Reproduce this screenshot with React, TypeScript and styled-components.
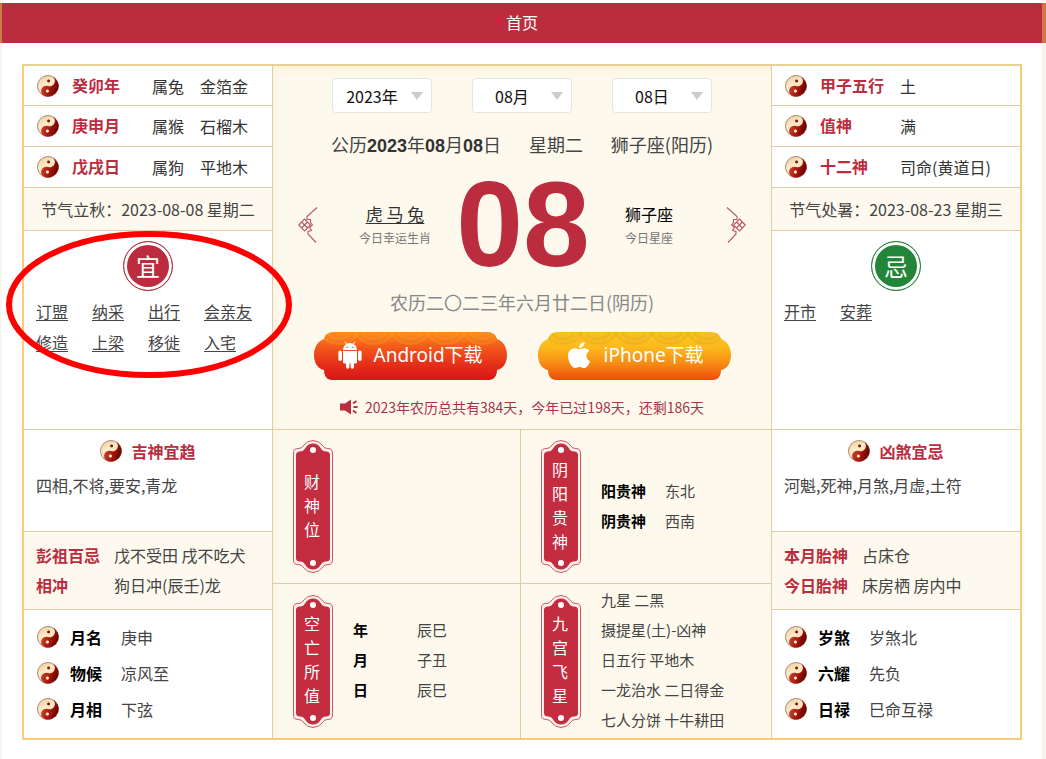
import React from "react";
import styled, { createGlobalStyle } from "styled-components";
import { FaApple } from "react-icons/fa";

const RED = "#bb2d3e";
const LINE = "#e3cba6";
const CREAM = "#fdf9ef";

const GlobalStyle = createGlobalStyle`
  *, *::before, *::after { box-sizing: border-box; }
  body {
    margin: 0;
    background: #fff;
    color: #444;
    font-family: "Noto Sans CJK SC", "Noto Sans", sans-serif;
    font-size: 16px;
    font-weight: 400;
    line-height: 24px;
  }
  ul, dl, dd, h2, p { margin: 0; padding: 0; }
  ul { list-style: none; }
  a { color: inherit; }
`;

const Page = styled.div`
  min-height: 100vh;
  padding-top: 3px;
  background: linear-gradient(to right, #f8f6f0 2px, #fff 2px, #fff calc(100% - 4px), #f5f3ee calc(100% - 4px));
`;

const TopNav = styled.nav`
  display: flex;
  align-items: center;
  justify-content: center;
  height: 40px;
  padding-bottom: 2px;
  background: ${RED};
  border-left: 2px solid #d07a45;
  border-right: 4px solid #cf7a42;
  color: #fff;
  a { text-decoration: none; }
`;

const Board = styled.main`
  display: grid;
  grid-template-columns: 1fr 2fr 1fr;
  margin: 21px 24px 19px 22px;
  border: 2px solid #fccb78;
  border-top-color: #e8d096;
`;

const SideColumn = styled.div<{ $side: "left" | "right" }>`
  position: relative;
  display: flex;
  flex-direction: column;
  ${(p) => (p.$side === "left" ? "border-right" : "border-left")}: 1px solid ${LINE};
`;

const PillarRow = styled.dl<{ $tall?: boolean }>`
  display: flex;
  align-items: center;
  height: ${(p) => (p.$tall ? 41 : 40)}px;
  padding-left: 13px;
  border-bottom: 1px solid ${LINE};
  dt { width: 80px; margin-left: 13px; padding-bottom: 2px; color: ${RED}; font-weight: 700; }
  dd { display: flex; gap: 16px; color: #333; }
`;

const SolarTerm = styled.p`
  display: flex;
  align-items: center;
  justify-content: center;
  height: 43px;
  background: ${CREAM};
  border-bottom: 1px solid ${LINE};
  white-space: pre;
`;

const Advice = styled.section`
  height: 199px;
  padding: 10px 12px 0;
  border-bottom: 1px solid ${LINE};
`;

const Seal = styled.h2<{ $color: string }>`
  display: flex;
  align-items: center;
  justify-content: center;
  width: 50px;
  height: 50px;
  margin: 0 auto 5px;
  border: 1px solid ${(p) => p.$color};
  border-radius: 50%;
  background: ${(p) => p.$color};
  box-shadow: inset 0 0 0 3px #fff;
  color: #fff;
  font-size: 24px;
  font-weight: 400;
  line-height: 48px;
`;

const AdviceList = styled.ul`
  display: grid;
  grid-template-columns: repeat(4, 56px);
  line-height: 31px;
  white-space: nowrap;
  a { text-underline-offset: 2px; text-decoration-thickness: 1px; }
`;

const Marker = styled.svg`
  position: absolute;
  top: 165px;
  left: -18px;
  width: 286px;
  height: 147px;
  pointer-events: none;
`;

const Spirits = styled.section`
  height: 102px;
  padding: 9px 12px 0;
  border-bottom: 1px solid ${LINE};
  p { margin-top: 10px; }
`;

const SpiritsTitle = styled.h2`
  display: flex;
  align-items: center;
  justify-content: center;
  gap: 9px;
  color: ${RED};
  font-size: 16px;
  font-weight: 700;
`;

const Taboo = styled.dl`
  height: 78px;
  padding: 8px 12px 0;
  background: ${CREAM};
  border-bottom: 1px solid ${LINE};
  line-height: 30px;
  div { display: flex; }
  dt { width: 78px; color: ${RED}; font-weight: 700; }
`;

const SignList = styled.dl`
  flex: 1;
  padding: 9px 13px;
  div { display: flex; align-items: center; height: 36px; }
  dt { margin: 0 19px 0 11px; color: #000; font-weight: 700; }
`;

const Center = styled.div`
  display: flex;
  flex-direction: column;
  background:
    linear-gradient(to bottom, #fdf3d8, transparent 10px),
    linear-gradient(to right, #fdf5e6, transparent 8px),
    repeating-linear-gradient(to bottom, #fdf9ee 0 6px, #fcf9eb 6px 10px);
`;

const Today = styled.section`
  display: flex;
  flex-direction: column;
  align-items: center;
  height: 364px;
  padding-top: 12px;
  border-bottom: 1px solid ${LINE};
`;

const DateForm = styled.form`
  display: flex;
  gap: 40px;
`;

const SelectBox = styled.div`
  position: relative;
  width: 100px;
  height: 35px;
  svg { position: absolute; top: 14px; right: 9px; pointer-events: none; }
`;

const DateSelect = styled.select`
  appearance: none;
  width: 100%;
  height: 100%;
  padding: 0 20px 0 0;
  border: 1px solid #e6e4de;
  border-radius: 4px;
  background: #fff;
  color: #111;
  font: inherit;
  text-align: center;
  text-align-last: center;
`;

const SolarDate = styled.p`
  display: flex;
  justify-content: space-between;
  width: 382px;
  height: 24px;
  margin-top: 19px;
  font-size: 18px;
  b { color: #333; font-family: "Liberation Sans", sans-serif; font-weight: 700; line-height: 20px; }
`;

const Hero = styled.div`
  display: grid;
  grid-template-columns: 20px 1fr 136px 1fr 20px;
  grid-template-rows: 120px;
  align-items: center;
  width: 448px;
  margin-top: 4px;
  text-align: center;
`;

const StepButton = styled.button`
  height: 36px;
  margin-top: 10px;
  padding: 0;
  border: 0;
  background: none;
  cursor: pointer;
  svg { display: block; }
`;

const BigDay = styled.strong`
  margin-top: 8px;
  padding-left: 2px;
  color: ${RED};
  font-family: "Liberation Sans", sans-serif;
  font-size: 120px;
  font-weight: 700;
  line-height: 120px;
`;

const Omen = styled.div<{ $side: "left" | "right" }>`
  margin-top: 12px;
  padding-${(p) => p.$side}: 18px;
  color: #000;
  small { display: block; color: #777; font-size: 12px; }
  a { color: #333; font-size: 17px; text-underline-offset: 2px; text-decoration-thickness: 1px; }
`;

const LunarDate = styled.p`
  margin-top: 10px;
  color: #888;
  font-size: 18px;
`;

const Downloads = styled.div`
  display: flex;
  gap: 31px;
  margin-top: 18px;
`;

const DownloadLink = styled.a`
  display: grid;
  width: 193px;
  height: 48px;
  color: #fff;
  font-family: "Noto Sans", "Noto Sans CJK SC", sans-serif;
  font-size: 19px;
  font-weight: 400;
  text-decoration: none;
  > * { grid-area: 1 / 1; }
`;

const DownloadLabel = styled.span<{ $indent: number; $gap: number }>`
  display: flex;
  align-items: center;
  gap: ${(p) => p.$gap}px;
  height: 46px;
  padding-left: ${(p) => p.$indent}px;
  white-space: nowrap;
`;

const Tip = styled.p`
  display: flex;
  align-items: center;
  gap: 7px;
  height: 20px;
  margin-top: 17px;
  color: #a93248;
  font-size: 14px;
`;

const Quarters = styled.div`
  display: grid;
  flex: 1;
  grid-template-columns: calc(50% - 1px) 1fr;
  grid-template-rows: 154px 154px;
`;

const Quarter = styled.section`
  display: flex;
  align-items: center;
  gap: 20px;
  padding-left: 20px;
  font-size: 15px;
  line-height: 30px;
  &:nth-child(odd) { border-right: 1px solid ${LINE}; }
  &:nth-child(-n + 2) { border-bottom: 1px solid ${LINE}; }
  dl, ul { padding-bottom: 2px; }
`;

const PlaqueBox = styled.h2`
  display: grid;
  place-items: center;
  width: 40px;
  height: 133px;
  color: #fff;
  font-size: 16px;
  font-weight: 400;
  line-height: 24px;
  > * { grid-area: 1 / 1; }
  span { width: 16px; margin: 0 2px 4px 0; word-break: break-all; }
`;

const PairList = styled.dl`
  div { display: flex; }
  dt { width: 64px; color: #000; font-weight: 700; }
`;

function Taiji() {
  return (
    <svg width="22" height="22" viewBox="0 0 22 22" aria-hidden="true">
      <defs>
        <linearGradient id="tjCream" x1="0" y1="0" x2="1" y2="1">
          <stop offset="0" stopColor="#e9c590" />
          <stop offset="0.4" stopColor="#fdebc9" />
          <stop offset="1" stopColor="#efc38c" />
        </linearGradient>
        <linearGradient id="tjRed" x1="0" y1="0" x2="1" y2="0">
          <stop offset="0" stopColor="#c4402a" />
          <stop offset="0.5" stopColor="#a8150f" />
          <stop offset="1" stopColor="#650300" />
        </linearGradient>
      </defs>
      <g transform="rotate(18 11 11)">
        <circle cx="11" cy="11" r="10.5" fill="url(#tjCream)" stroke="#9c6a50" strokeWidth="0.7" />
        <path
          d="M11 .5A10.500 10.500 0 0 1 11 21.500A5.250 5.250 0 0 1 11 11A5.250 5.250 0 0 0 11 .5Z"
          fill="url(#tjRed)"
        />
        <circle cx="10" cy="6" r="1.500" fill="#7a1a10" />
        <circle cx="12" cy="16" r="1.600" fill="#fdebc9" />
      </g>
    </svg>
  );
}

function Ornament({ flip }: { flip?: boolean }) {
  return (
    <svg width="20" height="36" viewBox="0 0 20 36" fill="none" stroke="#b9556a" strokeWidth="1.100" aria-hidden="true">
      <g transform={flip ? "matrix(-1 0 0 1 20 0)" : undefined}>
        <path d="M19 .5L9 9.500v3l3.500 0 0 3 2 2.500-3 2.500 2 3-3.500 1v2.500L18 35.500" />
        <path d="M.8 18L6.500 12l6 6-6 6zM3.700 15l5.700 6M9.400 15l-5.700 6" />
      </g>
    </svg>
  );
}

function Robot() {
  return (
    <svg width="24" height="28" viewBox="0 0 24 28" fill="#fff" aria-hidden="true">
      <path d="M7 .5l1.800 2.800M17 .5l-1.800 2.800" stroke="#fff" strokeWidth="0.9" />
      <path
        fillRule="evenodd"
        d="M5 9a7 7 0 0 1 14 0zM8.300 6.200a.8.8 0 1 0 1.600 0a.8.8 0 1 0-1.600 0M14.100 6.200a.8.8 0 1 0 1.600 0a.8.8 0 1 0-1.600 0"
      />
      <path d="M5 10h14v11a1.500 1.500 0 0 1-1.500 1.500H16V26a1.700 1.700 0 0 1-3.400 0v-3.500h-1.200V26A1.700 1.700 0 0 1 8 26v-3.500H6.500A1.500 1.500 0 0 1 5 21z" />
      <rect x="0.400" y="9.500" width="3.500" height="10.500" rx="1.700" />
      <rect x="20.100" y="9.500" width="3.500" height="10.500" rx="1.700" />
    </svg>
  );
}

const BADGE =
  "M20 0H173C179 0 182 3 183 7C189 9 193 15 193 23C193 31 189 37 183 38C183 44 180 48 175 48H18C13 48 10 44 10 38C4 37 0 31 0 23C0 15 4 9 10 7C11 3 14 0 20 0Z";

function BadgeShape({ id, stops, ripple }: { id: string; stops: string[]; ripple: string }) {
  return (
    <svg width="193" height="48" viewBox="0 0 193 48" aria-hidden="true">
      <defs>
        <linearGradient id={id} x1="0" y1="0" x2="0" y2="1">
          {stops.map((color, i) => (
            <stop key={color} offset={i / (stops.length - 1)} stopColor={color} />
          ))}
        </linearGradient>
        <clipPath id={`${id}-clip`}>
          <path d={BADGE} />
        </clipPath>
      </defs>
      <path d={BADGE} fill={`url(#${id})`} />
      <g clipPath={`url(#${id}-clip)`} fill="none" stroke={ripple} strokeOpacity="0.25" strokeWidth="2">
        {[25, 60, 96, 132, 168].map((x) => (
          <g key={x}>
            <ellipse cx={x} cy="0" rx="18" ry="12" fill={ripple} fillOpacity="0.18" />
            <ellipse cx={x} cy="0" rx="11" ry="7" />
          </g>
        ))}
      </g>
    </svg>
  );
}

function Speaker() {
  return (
    <svg width="18" height="16" viewBox="0 0 18 16" fill={RED} aria-hidden="true">
      <path d="M0 4.500h5L11 .5v15L5 11.500H0z" />
      <path d="M13 4.500L16.500 2M13.500 8H17.500M13 11.500L16.500 14" stroke={RED} strokeWidth="1.800" />
    </svg>
  );
}

function Plaque({ text }: { text: string }) {
  return (
    <PlaqueBox>
      <svg width="40" height="133" viewBox="0 0 40 133" aria-hidden="true">
        <path
          d="M.5 13Q.5 8.500 5 8.500Q9 8.500 10 6Q14 .5 20 .5Q26 .5 30 6Q31 8.500 35 8.500Q39.500 8.500 39.500 13V120Q39.500 124.500 35 124.500Q31 124.500 30 127Q26 132.500 20 132.500Q14 132.500 10 127Q9 124.500 5 124.500Q.5 124.500 .5 120Z"
          fill="#fdf3ea"
          stroke="#d0566a"
        />
        <path
          d="M3 15Q3 11.500 7 11.500Q10.500 11.500 12 8.500Q15 3.500 20 3.500Q25 3.500 28 8.500Q29.500 11.500 33 11.500Q37 11.500 37 15V118Q37 121.500 33 121.500Q29.500 121.500 28 124.500Q25 129.500 20 129.500Q15 129.500 12 124.500Q10.500 121.500 7 121.500Q3 121.500 3 118Z"
          fill="#c42c40"
        />
        <circle cx="20" cy="10" r="3" fill="#fff" />
        <circle cx="20" cy="123" r="3" fill="#fff" />
      </svg>
      <span>{text}</span>
    </PlaqueBox>
  );
}

interface SideData {
  side: "left" | "right";
  pillars: [string, string[]][];
  term: string;
  seal: string;
  sealColor: string;
  advice: string[];
  spiritsTitle: string;
  spirits: string;
  taboo: [string, string][];
  signs: [string, string][];
}

const LEFT: SideData = {
  side: "left",
  pillars: [
    ["癸卯年", ["属兔", "金箔金"]],
    ["庚申月", ["属猴", "石榴木"]],
    ["戊戌日", ["属狗", "平地木"]],
  ],
  term: "节气立秋：2023-08-08 星期二",
  seal: "宜",
  sealColor: RED,
  advice: ["订盟", "纳采", "出行", "会亲友", "修造", "上梁", "移徙", "入宅"],
  spiritsTitle: "吉神宜趋",
  spirits: "四相,不将,要安,青龙",
  taboo: [
    ["彭祖百忌", "戊不受田 戌不吃犬"],
    ["相冲", "狗日冲(辰壬)龙"],
  ],
  signs: [
    ["月名", "庚申"],
    ["物候", "凉风至"],
    ["月相", "下弦"],
  ],
};

const RIGHT: SideData = {
  side: "right",
  pillars: [
    ["甲子五行", ["土"]],
    ["值神", ["满"]],
    ["十二神", ["司命(黄道日)"]],
  ],
  term: "节气处暑：2023-08-23 星期三",
  seal: "忌",
  sealColor: "#23853a",
  advice: ["开市", "安葬"],
  spiritsTitle: "凶煞宜忌",
  spirits: "河魁,死神,月煞,月虚,土符",
  taboo: [
    ["本月胎神", "占床仓"],
    ["今日胎神", "床房栖 房内中"],
  ],
  signs: [
    ["岁煞", "岁煞北"],
    ["六耀", "先负"],
    ["日禄", "巳命互禄"],
  ],
};

function Side({ data, children }: { data: SideData; children?: React.ReactNode }) {
  return (
    <SideColumn $side={data.side}>
      {data.pillars.map(([name, values], i) => (
        <PillarRow key={name} $tall={i > 0}>
          <Taiji />
          <dt>{name}</dt>
          <dd>
            {values.map((v) => (
              <span key={v}>{v}</span>
            ))}
          </dd>
        </PillarRow>
      ))}
      <SolarTerm>{data.term}</SolarTerm>
      <Advice>
        <Seal $color={data.sealColor}>{data.seal}</Seal>
        <AdviceList>
          {data.advice.map((a) => (
            <li key={a}>
              <a href="#advice">{a}</a>
            </li>
          ))}
        </AdviceList>
      </Advice>
      <Spirits>
        <SpiritsTitle>
          <Taiji />
          {data.spiritsTitle}
        </SpiritsTitle>
        <p>{data.spirits}</p>
      </Spirits>
      <Taboo>
        {data.taboo.map(([k, v]) => (
          <div key={k}>
            <dt>{k}</dt>
            <dd>{v}</dd>
          </div>
        ))}
      </Taboo>
      <SignList>
        {data.signs.map(([k, v]) => (
          <div key={k}>
            <Taiji />
            <dt>{k}</dt>
            <dd>{v}</dd>
          </div>
        ))}
      </SignList>
      {children}
    </SideColumn>
  );
}

function DatePicker({ label, value }: { label: string; value: string }) {
  return (
    <SelectBox>
      <DateSelect aria-label={label} defaultValue={value}>
        <option>{value}</option>
      </DateSelect>
      <svg width="12" height="8" viewBox="0 0 12 8" aria-hidden="true">
        <path d="M0 0H12L6 8Z" fill="#ccc" />
      </svg>
    </SelectBox>
  );
}

function Pairs({ items }: { items: [string, string][] }) {
  return (
    <PairList>
      {items.map(([k, v]) => (
        <div key={k}>
          <dt>{k}</dt>
          <dd>{v}</dd>
        </div>
      ))}
    </PairList>
  );
}

const STARS = ["九星 二黑", "摄提星(土)-凶神", "日五行 平地木", "一龙治水 二日得金", "七人分饼 十牛耕田"];

export default function App() {
  return (
    <Page lang="zh-CN">
      <GlobalStyle />
      <TopNav>
        <a href="#home">首页</a>
      </TopNav>
      <Board>
        <Side data={LEFT}>
          <Marker viewBox="0 0 286 147" aria-hidden="true">
            <ellipse cx="143" cy="73.500" rx="140" ry="70.500" fill="none" stroke="#f00" strokeWidth="6" />
          </Marker>
        </Side>
        <Center>
          <Today>
            <DateForm>
              <DatePicker label="年" value="2023年" />
              <DatePicker label="月" value="08月" />
              <DatePicker label="日" value="08日" />
            </DateForm>
            <SolarDate>
              <span>
                公历<b>2023</b>年<b>08</b>月<b>08</b>日
              </span>
              <span>星期二</span>
              <span>狮子座(阳历)</span>
            </SolarDate>
            <Hero>
              <StepButton aria-label="前一天">
                <Ornament />
              </StepButton>
              <Omen $side="left">
                <a href="#zodiac">虎 马 兔</a>
                <small>今日幸运生肖</small>
              </Omen>
              <BigDay>08</BigDay>
              <Omen $side="right">
                狮子座
                <small>今日星座</small>
              </Omen>
              <StepButton aria-label="后一天">
                <Ornament flip />
              </StepButton>
            </Hero>
            <LunarDate>农历二〇二三年六月廿二日(阴历)</LunarDate>
            <Downloads>
              <DownloadLink href="#android">
                <BadgeShape id="badgeRed" stops={["#f98a1c", "#f2571a", "#e6301a", "#d61616"]} ripple="#ffa62c" />
                <DownloadLabel $indent={24} $gap={12}>
                  <Robot />
                  Android下载
                </DownloadLabel>
              </DownloadLink>
              <DownloadLink href="#iphone">
                <BadgeShape id="badgeGold" stops={["#fccb20", "#fcb81c", "#f68a14", "#ee4c0c"]} ripple="#e09a28" />
                <DownloadLabel $indent={26} $gap={10}>
                  <FaApple size={30} aria-hidden="true" />
                  iPhone下载
                </DownloadLabel>
              </DownloadLink>
            </Downloads>
            <Tip>
              <Speaker />
              2023年农历总共有384天，今年已过198天，还剩186天
            </Tip>
          </Today>
          <Quarters>
            <Quarter>
              <Plaque text="财神位" />
            </Quarter>
            <Quarter>
              <Plaque text="阴阳贵神" />
              <Pairs
                items={[
                  ["阳贵神", "东北"],
                  ["阴贵神", "西南"],
                ]}
              />
            </Quarter>
            <Quarter>
              <Plaque text="空亡所值" />
              <Pairs
                items={[
                  ["年", "辰巳"],
                  ["月", "子丑"],
                  ["日", "辰巳"],
                ]}
              />
            </Quarter>
            <Quarter>
              <Plaque text="九宫飞星" />
              <ul>
                {STARS.map((s) => (
                  <li key={s}>{s}</li>
                ))}
              </ul>
            </Quarter>
          </Quarters>
        </Center>
        <Side data={RIGHT} />
      </Board>
    </Page>
  );
}
